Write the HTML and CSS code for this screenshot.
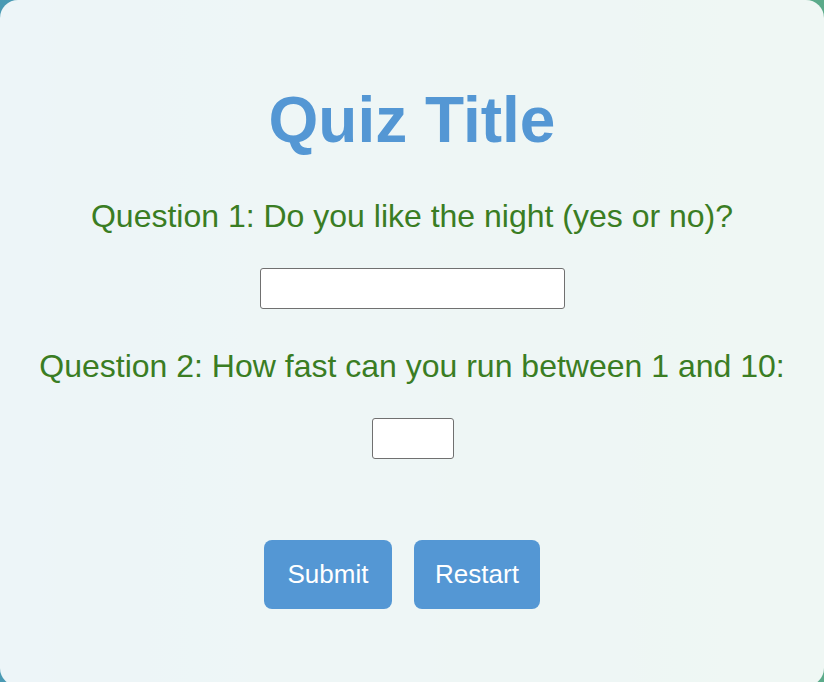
FILE: index.html
```html
<!DOCTYPE html>
<html lang="en">
<head>
<meta charset="utf-8">
<title>Quiz</title>
<link rel="stylesheet" href="styles.css">
</head>
<body>
<main class="card">
  <h1 class="title">Quiz Title</h1>
  <p class="question q1">Question 1: Do you like the night (yes or no)?</p>
  <div class="field"><input class="answer answer-wide" type="text"></div>
  <p class="question q2">Question 2: How fast can you run between 1 and 10:</p>
  <div class="field"><input class="answer answer-short" type="text"></div>
  <div class="actions">
    <button class="btn btn-submit" type="button">Submit</button>
    <button class="btn btn-restart" type="button">Restart</button>
  </div>
</main>
</body>
</html>
```
FILE: styles.css
```css
html, body {
  margin: 0;
  padding: 0;
}
body {
  height: 682px;
  overflow: hidden;
  background: linear-gradient(to right, #4a9ab4, #5bab8a);
  font-family: "Liberation Sans", Arial, Helvetica, sans-serif;
}
.card {
  box-sizing: border-box;
  height: 686px;
  background: rgba(255, 255, 255, 0.9);
  border-radius: 18px;
  padding-top: 83px;
  text-align: center;
}
.title {
  margin: 0;
  font-size: 64px;
  line-height: 74px;
  font-weight: bold;
  color: #5497d4;
}
.question {
  margin: 0;
  font-size: 32px;
  line-height: 36px;
  color: #3a7d23;
}
.q1 { margin-top: 41px; }
.q2 { margin-top: 39px; }
.field {
  display: flex;
  justify-content: center;
  margin-top: 34px;
  padding-left: 1px;
}
.answer {
  box-sizing: border-box;
  height: 41px;
  margin: 0;
  border: 1px solid #707070;
  border-radius: 3px;
  background: #fff;
  font-family: inherit;
  font-size: 16px;
}
.answer-wide { width: 305px; }
.answer-short { width: 82px; }
.actions {
  display: flex;
  justify-content: center;
  gap: 22px;
  margin-top: 81px;
  padding-right: 20px;
}
.btn {
  box-sizing: border-box;
  margin: 0;
  padding: 19px 0 20px;
  border: none;
  border-radius: 8px;
  background: #5497d4;
  color: #fff;
  font-family: inherit;
  font-size: 26px;
  line-height: 30px;
  text-align: center;
}
.btn-submit { width: 128px; }
.btn-restart { width: 126px; }
```
